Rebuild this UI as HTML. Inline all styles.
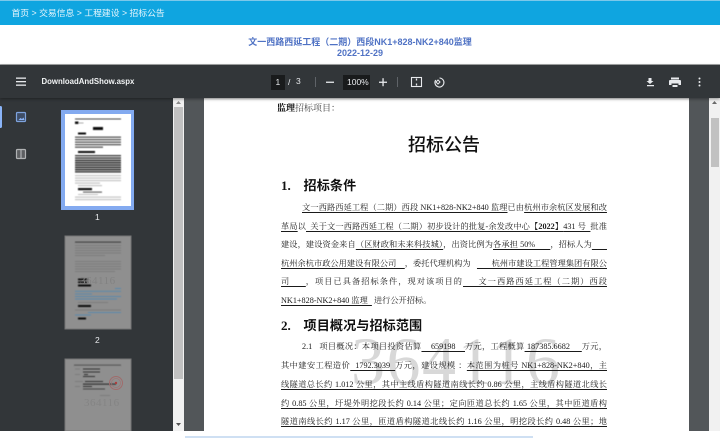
<!DOCTYPE html>
<html lang="zh-CN"><head><meta charset="utf-8"><title>招标公告</title>
<style>
html,body{margin:0;padding:0;width:720px;height:438px;overflow:hidden;background:#fff;font-family:"Liberation Sans","Noto Sans CJK SC",sans-serif}
.a{position:absolute}
#top{left:0;top:1px;width:720px;height:24px;background:#0fa5e0;color:#e6f5fc;font-size:8.8px;line-height:25px;text-indent:11.5px;white-space:pre}
.tt{left:0;width:720px;text-align:center;color:#4f72c4;font-size:9px;font-weight:bold;line-height:14px}
#bar{left:0;top:65px;width:720px;height:33px;background:#323639;box-shadow:0 1px 3px rgba(0,0,0,.4);z-index:5}
#side{left:0;top:98px;width:173px;height:333px;background:#323639}
#view{left:184px;top:98px;width:525px;height:333px;background:#525659}
#page{left:204px;top:98px;width:485px;height:333px;background:#fff;overflow:hidden}
.sb{background:#f1f1f1;width:11px;top:98px;height:333px}
.th{background:#c1c1c1;position:absolute;left:1px;width:9px}
.l{position:absolute;left:77px;width:326px;font-family:"Liberation Serif","Noto Serif CJK SC",serif;font-size:8.2px;line-height:14px;height:14px;color:#1a1a1a;white-space:nowrap;text-align:justify;text-align-last:justify}
.l u{text-decoration-thickness:1px;text-underline-offset:2px}
.h{position:absolute;font-family:"Liberation Sans","Noto Sans CJK SC",sans-serif;font-weight:bold;color:#111;font-size:13.1px;line-height:18px;white-space:pre}
.tb{color:#e8eaed;font-size:8.5px;line-height:12px;white-space:pre}
</style></head><body>
<div class="a" style="left:0;top:0;width:720px;height:1px;background:#7cc8ea"></div>
<div class="a" id="top">首页 &gt; 交易信息 &gt; 工程建设 &gt; 招标公告</div>
<div class="a tt" style="top:35px">文一西路西延工程（二期）西段NK1+828-NK2+840监理</div>
<div class="a tt" style="top:46px">2022-12-29</div>
<div class="a" style="left:0;top:64px;width:720px;height:1px;background:#a5a7a8"></div>

<div class="a" id="bar">
 <svg class="a" style="left:0;top:0" width="720" height="33" viewBox="0 65 720 33">
  <g fill="#e8eaed">
   <rect x="16" y="77.5" width="10" height="1.3"/><rect x="16" y="81" width="10" height="1.3"/><rect x="16" y="84.5" width="10" height="1.3"/>
   <rect x="271" y="75" width="14" height="15" fill="#191b1c"/>
   <rect x="343" y="75" width="27" height="15" fill="#191b1c"/>
   <rect x="326" y="81.6" width="8" height="1.3"/>
   <rect x="379" y="81.6" width="8" height="1.3"/><rect x="382.4" y="78.2" width="1.3" height="8"/>
   <rect x="315" y="77" width="1" height="10" fill="#5f6368"/><rect x="397" y="77" width="1" height="10" fill="#5f6368"/>
   <path d="M648.500 78h3v3h2l-3.500 3-3.500-3h2zM647 85h7v1.200h-7z"/>
   <path d="M671 77.500h8v2h-8zM670 80h10a1 1 0 0 1 1 1v4h-2.500v-1.500h-7V85H669v-4a1 1 0 0 1 1-1zM672.500 85h5v2h-5z"/>
   <circle cx="699.500" cy="78.500" r="1"/><circle cx="699.500" cy="82" r="1"/><circle cx="699.500" cy="85.500" r="1"/>
  </g>
  <g fill="none" stroke="#e8eaed" stroke-width="1.100">
   <rect x="411.500" y="77.500" width="10" height="9"/>
   <path d="M416.500 78.500v2M416.500 83.500v2" stroke-width="1.300"/>
   <path d="M439.500 78a4.500 4.500 0 1 1-3.800 2"/>
   <path d="M436 82l2-2 2 2-2 2z" stroke-width="1"/>
  </g>
 </svg>
 <div class="a" style="left:41.500px;top:10px;color:#f1f3f4;font-size:7.8px;line-height:13px;font-weight:bold;white-space:pre">DownloadAndShow.aspx</div>
 <div class="a tb" style="left:275.500px;top:10.500px">1</div>
 <div class="a tb" style="left:288px;top:10.500px">/</div>
 <div class="a tb" style="left:296px;top:10px">3</div>
 <div class="a tb" style="left:347px;top:10.500px">100%</div>
</div>

<div class="a" id="side">
 <svg class="a" style="left:0;top:0" width="173" height="333" viewBox="0 98 173 333">
  <defs><filter id="b" x="-5%" y="-5%" width="110%" height="110%"><feGaussianBlur stdDeviation=".55"/></filter></defs>
  <rect x="-2" y="106" width="4" height="22" rx="1.500" fill="#8ab4f8"/>
  <rect x="16.500" y="112.500" width="9" height="9" rx="1" fill="#3e4d66" stroke="#7ea3de" stroke-width="1.200"/>
  <path d="M18.500 120l2-2 1.500 1 1.500-1.500 1 2.500z" fill="#8ab4f8"/>
  <rect x="16.500" y="149.500" width="9" height="9" rx="1" fill="#5d5f62" stroke="#b0b2b4" stroke-width="1.200"/>
  <path d="M21 150v8" stroke="#c0c2c4" stroke-width="1"/>

  <!-- thumb 1 -->
  <rect x="61" y="110" width="73" height="100" fill="#83aaf0"/>
  <rect x="65" y="114" width="66" height="92" fill="#fff"/>
  <g filter="url(#b)">
   <rect x="75" y="118.500" width="46" height="1" fill="#444"/>
   <rect x="75" y="121.500" width="3.500" height="2.500" fill="#111"/><rect x="78.500" y="122.500" width="5" height="1" fill="#aaa"/>
   <rect x="93" y="127" width="10" height="3" fill="#111"/>
   <rect x="78" y="132.500" width="8" height="2" fill="#111"/>
   <g fill="#555">
    <rect x="75" y="136.500" width="46" height="1.300"/><rect x="75" y="139" width="46" height="1.300"/><rect x="75" y="141.500" width="46" height="1.300"/><rect x="75" y="144" width="46" height="1.300"/><rect x="75" y="146.500" width="28" height="1.300"/>
   </g>
   <rect x="78" y="151" width="17" height="2" fill="#111"/>
   <g fill="#3a3a3a">
    <rect x="75" y="155" width="46" height="1.300"/><rect x="75" y="157.300" width="46" height="1.500"/><rect x="75" y="159.600" width="46" height="1.700"/><rect x="75" y="161.900" width="46" height="1.700"/><rect x="75" y="164.200" width="46" height="1.700"/><rect x="75" y="166.500" width="46" height="1.700"/><rect x="75" y="168.800" width="46" height="1.700"/><rect x="75" y="171.100" width="46" height="1.500"/>
   </g>
   <g fill="#c4c4c4">
    <rect x="75" y="175" width="46" height="1.200"/><rect x="75" y="177.500" width="46" height="1.200"/><rect x="75" y="180" width="46" height="1.200"/><rect x="75" y="182.500" width="25" height="1.200"/><rect x="78" y="185" width="24" height="1.200"/>
   </g>
   <rect x="78" y="188" width="14" height="2.200" fill="#111"/>
   <rect x="83" y="191.500" width="19" height="1.200" fill="#666"/>
   <rect x="78" y="194" width="20" height="1" fill="#c4c4c4"/><rect x="75" y="196.500" width="46" height="1.200" fill="#c4c4c4"/><rect x="75" y="199" width="46" height="1.200" fill="#c4c4c4"/>
  </g>

  <!-- thumb 2 -->
  <rect x="65" y="236" width="66" height="93" fill="#8f8f8f" stroke="#757676" stroke-width="1"/>
  <g filter="url(#b)">
   <rect x="75" y="241.500" width="46" height="1.200" fill="#444"/>
   <g fill="#7c7c7c">
    <rect x="75" y="245" width="46" height="1"/><rect x="75" y="247.500" width="46" height="1"/><rect x="75" y="250" width="46" height="1"/><rect x="75" y="252.500" width="46" height="1"/><rect x="75" y="255" width="30" height="1"/>
    <rect x="75" y="261" width="46" height="1"/><rect x="75" y="263.500" width="46" height="1"/><rect x="75" y="266" width="46" height="1"/><rect x="75" y="268.500" width="46" height="1"/><rect x="75" y="271" width="40" height="1"/>
   </g>
   <rect x="78" y="278.500" width="10" height="1.800" fill="#111"/><rect x="78" y="281.500" width="10" height="1.500" fill="#111"/>
   <rect x="78" y="284.500" width="13" height="2" fill="#111"/>
   <g fill="#5a89ad">
    <rect x="115" y="288" width="6" height="1"/><rect x="75" y="290.800" width="46" height="1"/><rect x="75" y="293.500" width="17" height="1"/><rect x="75" y="296" width="46" height="1"/><rect x="75" y="298.500" width="42" height="1"/>
    <rect x="88" y="312" width="33" height="1"/><rect x="75" y="314.500" width="16" height="1"/>
   </g>
   <rect x="78" y="305" width="13" height="2" fill="#111"/>
   <rect x="78" y="317.500" width="8" height="2" fill="#111"/>
   <g fill="#7c7c7c"><rect x="75" y="309.500" width="46" height="1"/><rect x="78" y="302" width="30" height="1"/></g>
  </g>
  <text x="80" y="284" font-family="Liberation Serif" font-size="11" fill="#828282" letter-spacing=".5">364116</text>

  <!-- thumb 3 -->
  <rect x="65" y="359" width="66" height="72" fill="#8f8f8f" stroke="#757676" stroke-width="1"/>
  <g filter="url(#b)">
   <rect x="74" y="364.500" width="47" height="1.200" fill="#5a5a5a"/>
   <rect x="83" y="368.500" width="17" height="1" fill="#333"/><rect x="83" y="371.500" width="17" height="1" fill="#333"/><rect x="84" y="374" width="4" height="1" fill="#333"/><rect x="83" y="376" width="12" height="1" fill="#333"/>
   <rect x="85" y="381" width="18" height="1" fill="#333"/><rect x="83" y="383.500" width="33" height="1.200" fill="#333"/><rect x="83" y="386" width="9" height="1" fill="#333"/><rect x="83" y="388.500" width="22" height="1" fill="#444"/>
   <g fill="#7c7c7c"><rect x="75" y="368.500" width="5" height="1"/><rect x="75" y="374" width="5" height="1"/><rect x="75" y="381" width="8" height="1"/><rect x="75" y="386" width="5" height="1"/><rect x="100" y="395" width="10" height="1"/></g>
  </g>
  <circle cx="116" cy="383" r="6.500" fill="none" stroke="#a06c6c" stroke-width="1"/><circle cx="116" cy="383" r="4.500" fill="none" stroke="#a07474" stroke-width=".7"/>
  <circle cx="116" cy="383" r="1.200" fill="#b03c3c"/>
  <text x="84" y="406" font-family="Liberation Serif" font-size="11" fill="#848484" letter-spacing=".5">364116</text>
 </svg>
 <div class="a" style="left:95px;top:113px;color:#e8eaed;font-size:8.500px;line-height:12px">1</div>
 <div class="a" style="left:95px;top:236px;color:#e8eaed;font-size:8.500px;line-height:12px">2</div>
</div>

<div class="a sb" style="left:173px"><div class="th" style="top:9px;height:272px"></div>
 <svg class="a" style="left:0;top:0" width="11" height="333"><path d="M3 6l2.500-3L8 6z" fill="#8a8a8a"/><path d="M3 325h5l-2.500 3z" fill="#505050"/></svg></div>

<div class="a" id="view"></div>
<div class="a" id="page">
 <div class="l" style="left:73px;top:3px;width:auto;text-align-last:auto;font-size:9px"><b style="color:#000">监理</b><span style="color:#444">招标项目：</span></div>
 <div class="a" style="left:204px;top:35px;font-family:'Liberation Sans','Noto Sans CJK SC',sans-serif;font-size:18px;line-height:24px;color:#111;font-weight:500;white-space:nowrap">招标公告</div>
 <div class="h" style="left:77px;top:79px"><span style="font-family:'Liberation Serif'">1.</span></div>
 <div class="h" style="left:99.500px;top:79px;letter-spacing:.1px">招标条件</div>

 <div class="l" style="top:103px"><span style="display:inline-block;width:21px"></span><u>文一西路西延工程（二期）西段 NK1+828-NK2+840 监理</u>已由<u>杭州市余杭区发展和改</u></div>
 <div class="l" style="top:121.500px"><u>革局</u>以<u>&nbsp;&nbsp;关于文一西路西延工程（二期）初步设计的批复-余发改中心<b>【2022】</b>431 号&nbsp;&nbsp;</u>批准</div>
 <div class="l" style="top:140px">建设，建设资金来自<u>（区财政和未来科技城）</u>，出资比例为<u>各承担 50%&nbsp;&nbsp;&nbsp;&nbsp;&nbsp;&nbsp;&nbsp;</u>，招标人为<u>&nbsp;&nbsp;&nbsp;&nbsp;&nbsp;&nbsp;&nbsp;</u></div>
 <div class="l" style="top:158.500px"><u>杭州余杭市政公用建设有限公司&nbsp;&nbsp;&nbsp;&nbsp;</u>，委托代理机构为&nbsp;&nbsp;&nbsp;<u>&nbsp;&nbsp;&nbsp;&nbsp;&nbsp;&nbsp;&nbsp;杭州市建设工程管理集团有限公</u></div>
 <div class="l" style="top:177px"><u>司&nbsp;&nbsp;&nbsp;&nbsp;&nbsp;</u>，项目已具备招标条件，现对该项目的<u>&nbsp;&nbsp;&nbsp;&nbsp;&nbsp;文一西路西延工程（二期）西段</u></div>
 <div class="l" style="top:195.500px;width:auto;text-align-last:auto"><u>NK1+828-NK2+840 监理&nbsp;&nbsp;</u>&nbsp;进行公开招标。</div>

 <div class="h" style="left:77px;top:219px"><span style="font-family:'Liberation Serif'">2.</span></div>
 <div class="h" style="left:99.500px;top:219px;letter-spacing:.1px">项目概况与招标范围</div>

 <div class="a" style="left:147px;top:227px;font-family:'Liberation Serif',serif;font-size:68px;line-height:72px;color:rgba(60,60,60,.2);letter-spacing:1.500px;white-space:nowrap">364116</div>

 <div class="l" style="top:242px"><span style="display:inline-block;width:21px"></span>2.1&nbsp;&nbsp;&nbsp;项目概况：本项目投资估算<u>&nbsp;&nbsp;&nbsp;&nbsp;659198&nbsp;&nbsp;&nbsp;&nbsp;</u>万元，工程概算<u>&nbsp;187385.6682&nbsp;&nbsp;&nbsp;&nbsp;&nbsp;</u>万元，</div>
 <div class="l" style="top:261px">其中建安工程造价<u>&nbsp;&nbsp;1792.3039&nbsp;&nbsp;</u>万元，建设规模 ：<u>本范围为桩号 NK1+828-NK2+840，主</u></div>
 <div class="l" style="top:280px"><u>线隧道总长约 1.012 公里，其中主线盾构隧道南线长约 0.86 公里，主线盾构隧道北线长</u></div>
 <div class="l" style="top:298.500px"><u>约 0.85 公里，圩堤外明挖段长约 0.14 公里；定向匝道总长约 1.65 公里，其中匝道盾构</u></div>
 <div class="l" style="top:317px"><u>隧道南线长约 1.17 公里，匝道盾构隧道北线长约 1.16 公里，明挖段长约 0.48 公里；地</u></div>
</div>
<div class="a" style="left:204px;top:98px;width:485px;height:2px;background:linear-gradient(#d8d8d8,#fff)"></div>

<div class="a sb" style="left:709px"><div class="th" style="left:2px;width:8px;top:20px;height:49px"></div>
 <svg class="a" style="left:0;top:0" width="11" height="333"><path d="M3 6l2.500-3L8 6z" fill="#6a6a6a"/></svg></div>

<div class="a" style="left:0;top:431px;width:720px;height:7px;background:#fff"></div>
<div class="a" style="left:185px;top:436px;width:348px;height:2px;background:#cfe0f3"></div>
</body></html>
